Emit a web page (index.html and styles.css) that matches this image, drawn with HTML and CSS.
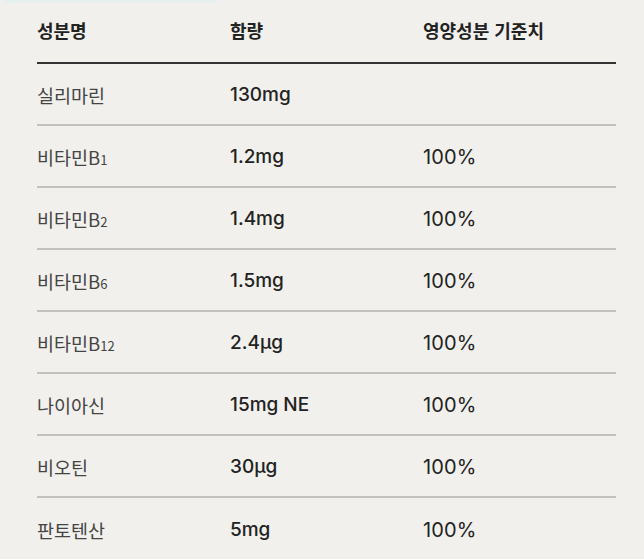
FILE: index.html
```html
<!DOCTYPE html>
<html lang="ko">
<head>
<meta charset="utf-8">
<link rel="stylesheet" href="styles.css">
</head>
<body>
<div class="strip"></div>
<div class="table">
  <div class="row head">
    <div class="cell">성분명</div>
    <div class="cell">함량</div>
    <div class="cell">영양성분 기준치</div>
  </div>
  <div class="row">
    <div class="cell name">실리마린</div>
    <div class="cell amt">130mg</div>
    <div class="cell pct"></div>
  </div>
  <div class="row">
    <div class="cell name">비타민B<span class="sub">1</span></div>
    <div class="cell amt">1.2mg</div>
    <div class="cell pct">100%</div>
  </div>
  <div class="row">
    <div class="cell name">비타민B<span class="sub">2</span></div>
    <div class="cell amt">1.4mg</div>
    <div class="cell pct">100%</div>
  </div>
  <div class="row">
    <div class="cell name">비타민B<span class="sub">6</span></div>
    <div class="cell amt">1.5mg</div>
    <div class="cell pct">100%</div>
  </div>
  <div class="row">
    <div class="cell name">비타민B<span class="sub">12</span></div>
    <div class="cell amt">2.4μg</div>
    <div class="cell pct">100%</div>
  </div>
  <div class="row">
    <div class="cell name">나이아신</div>
    <div class="cell amt">15mg NE</div>
    <div class="cell pct">100%</div>
  </div>
  <div class="row">
    <div class="cell name">비오틴</div>
    <div class="cell amt">30μg</div>
    <div class="cell pct">100%</div>
  </div>
  <div class="row last">
    <div class="cell name">판토텐산</div>
    <div class="cell amt">5mg</div>
    <div class="cell pct">100%</div>
  </div>
</div>
</body>
</html>
```
FILE: styles.css
```css
html, body {
  margin: 0;
  padding: 0;
  background: #f1f0ec;
}
body {
  width: 644px;
  height: 559px;
  overflow: hidden;
  font-family: "Noto Sans CJK KR", "Noto Sans", sans-serif;
  color: #222;
}
.strip {
  margin-left: 5px;
  width: 210px;
  height: 3px;
  background: #e4efee;
}
.table {
  margin-top: -3px;
  margin-left: 37px;
  width: 579px;
}
.row {
  display: grid;
  grid-template-columns: 193px 193px 1fr;
  align-items: center;
  height: 62px;
  box-sizing: border-box;
  border-bottom: 2px solid #c3c1bb;
  padding-top: 1px;
}
.row.head {
  height: 64px;
  border-bottom: 2px solid #333;
  font-size: 18px;
  font-weight: 700;
  color: #222;
  padding-top: 0;
  padding-bottom: 2px;
}
.row.last {
  border-bottom: none;
}
.name {
  font-size: 18.5px;
  color: #444;
  font-weight: 400;
}
.sub {
  font-size: 13px;
}
.amt {
  font-family: Inter, "Noto Sans", sans-serif;
  font-size: 19px;
  font-weight: 500;
  color: #222;
}
.pct {
  font-family: Inter, "Noto Sans", sans-serif;
  font-size: 20px;
  font-weight: 400;
  color: #222;
  letter-spacing: 0.1px;
}
```
